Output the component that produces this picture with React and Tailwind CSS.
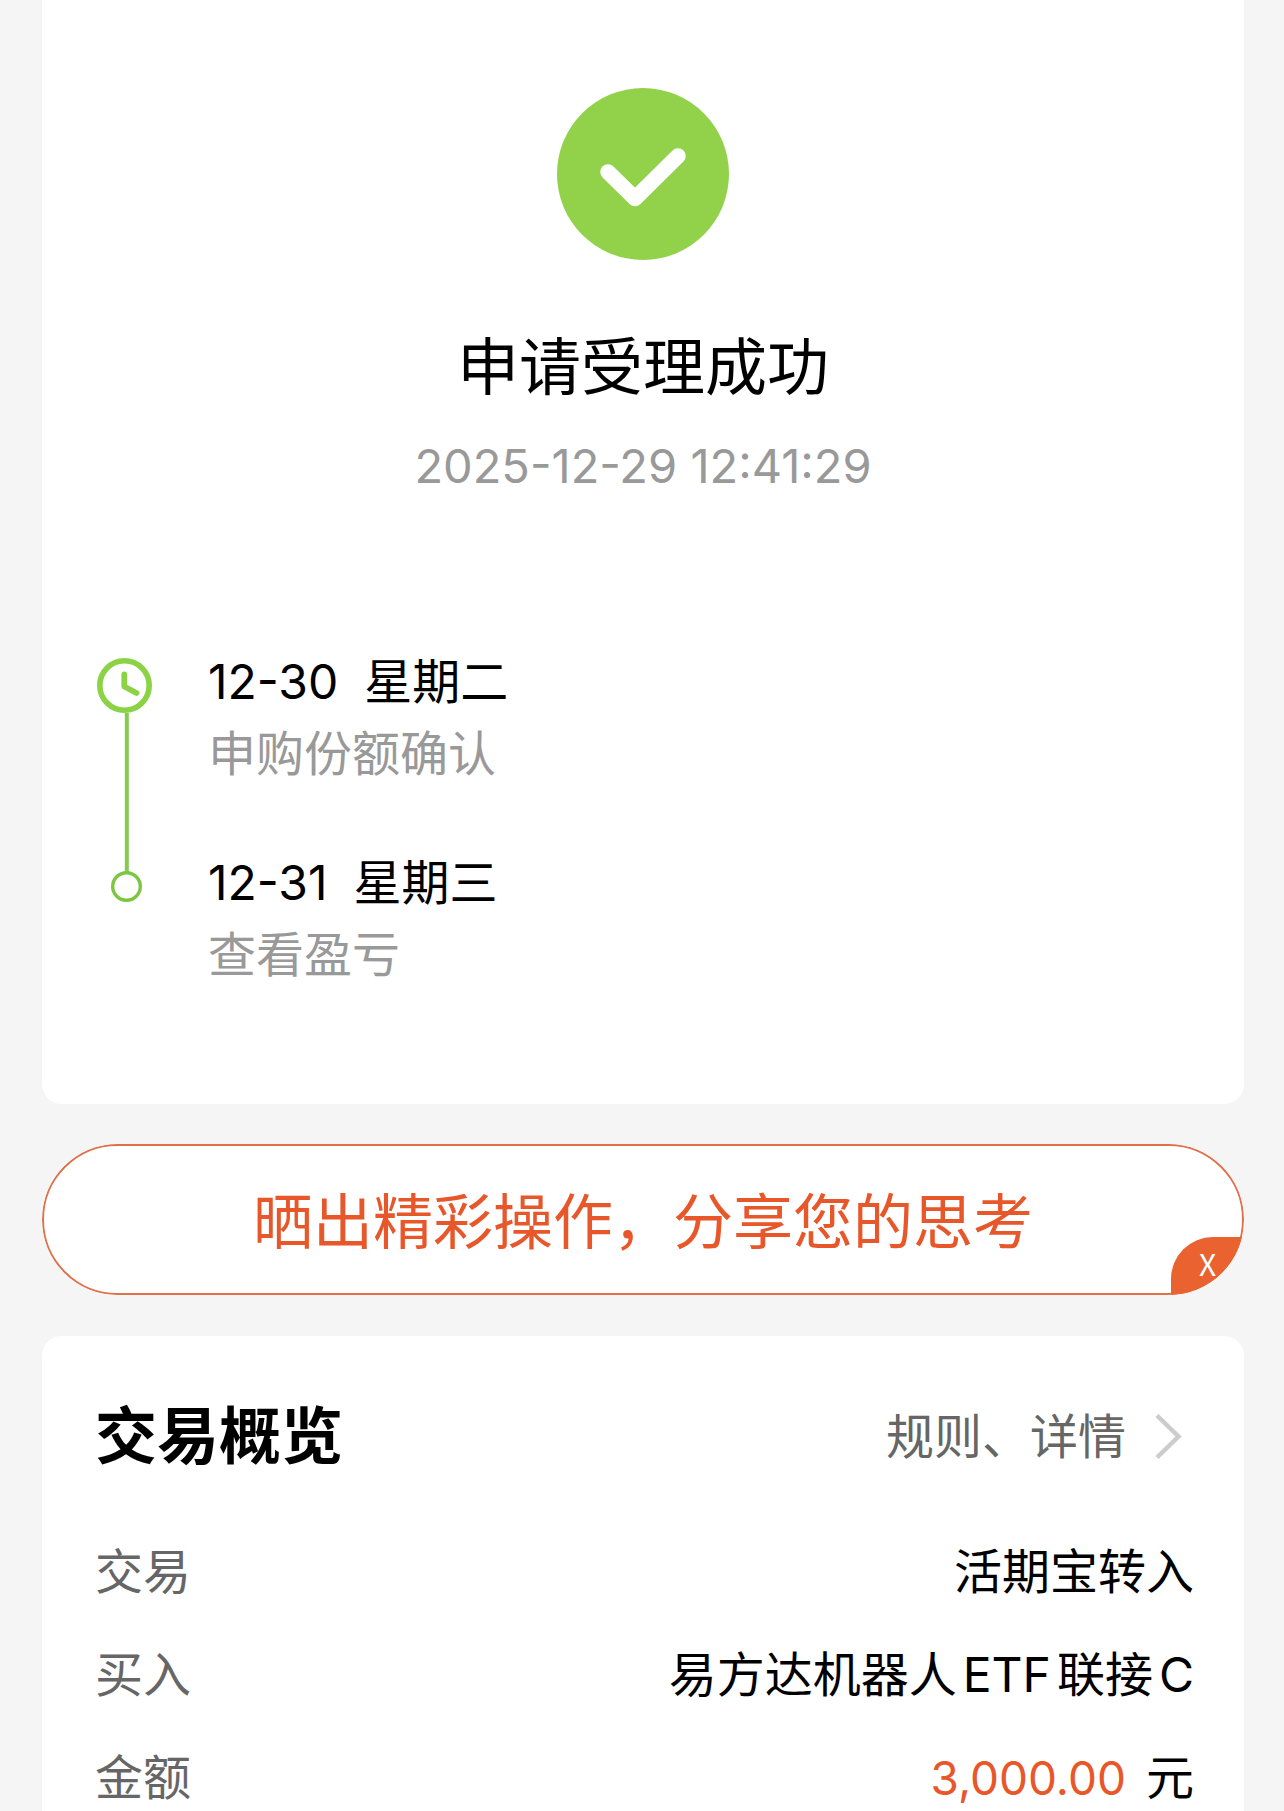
const etapes = [
  { date: "12-30", jour: "星期二", texte: "申购份额确认" },
  { date: "12-31", jour: "星期三", texte: "查看盈亏" },
];

function SuccessIcon() {
  return (
    <svg className="w-[172px] h-[172px]" viewBox="0 0 172 172" fill="none" aria-hidden="true">
      <circle cx="86" cy="86" r="86" fill="#92D24A" />
      <path d="M51 84L78 110.5L121 68" stroke="#fff" strokeWidth="15.5" strokeLinecap="round" strokeLinejoin="round" />
    </svg>
  );
}

// Horloge, trait vertical puis petit rond
function TimelineTrack() {
  return (
    <svg className="w-[58px] h-[246px] mt-3 shrink-0" viewBox="0 0 58 246" fill="none" aria-hidden="true">
      <circle cx="29.5" cy="27.5" r="24.7" stroke="#8BD345" strokeWidth="5.6" />
      <path d="M29.3 16.5V28.5L41.5 35" stroke="#8BD345" strokeWidth="5.8" strokeLinecap="round" strokeLinejoin="round" />
      <path d="M31.8 55V214" stroke="#86CB4E" strokeWidth="4" />
      <circle cx="31.5" cy="228.5" r="13.8" stroke="#7DC642" strokeWidth="3.4" />
    </svg>
  );
}

function Row({ label, children }) {
  return (
    <div className="flex items-center justify-between">
      <dt className="text-[#666]">{label}</dt>
      <dd className="text-black">{children}</dd>
    </div>
  );
}

function App() {
  return (
    <main
      lang="zh-CN"
      className="min-h-screen flex flex-col pl-[42px] pr-10 bg-[#f5f5f5] text-black text-[48px] leading-[72px] font-['Inter','Noto_Sans_CJK_SC',sans-serif]"
    >
      <section className="bg-white rounded-b-[20px] pt-[88px] pb-[113px]">
        <div className="flex flex-col items-center">
          <SuccessIcon />
          <h1 className="mt-[72px] text-[62px]">申请受理成功</h1>
          <time className="mt-[26px] text-[47px] text-[#999]">2025-12-29 12:41:29</time>
        </div>

        <div className="flex gap-[55px] mt-36 pl-[53px]">
          <TimelineTrack />
          <ol className="flex flex-col gap-[57px]">
            {etapes.map(e => (
              <li key={e.date}>
                <div className="flex gap-[26px]">
                  <span>{e.date}</span>
                  <span>{e.jour}</span>
                </div>
                <p className="text-[#999]">{e.texte}</p>
              </li>
            ))}
          </ol>
        </div>
      </section>

      <div className="relative mt-10 overflow-hidden rounded-full">
        <button
          type="button"
          className="block w-full pt-10 pb-[35px] rounded-full border-2 border-[#e07048] bg-white text-[60px] text-[#e8572a]"
        >
          晒出精彩操作，分享您的思考
        </button>
        <button
          type="button"
          aria-label="X"
          className="absolute right-0 bottom-0 w-[73px] h-[58px] rounded-tl-[42px] bg-[#e9622f] text-white text-[30px] leading-[52px] pb-1.5 font-['Noto_Sans_CJK_SC',sans-serif]"
        >
          X
        </button>
      </div>

      <section className="grow mt-[41px] bg-white rounded-t-[20px] pt-[65px] pb-0.5 pl-[53px] pr-[50px]">
        <div className="flex items-center justify-between">
          <h2 className="text-[62px] font-bold">交易概览</h2>
          <a href="#details" className="flex items-center gap-7 pr-3 text-[#666]">
            规则、详情
            <svg className="w-7 h-12" viewBox="0 0 28 48" fill="none" aria-hidden="true">
              <path d="M3 2.5L24.5 23.5L3 44.5" stroke="#ccc" strokeWidth="4.5" />
            </svg>
          </a>
        </div>
        <dl className="flex flex-col gap-[41px] mt-[68px] leading-[62px]">
          <Row label="交易">活期宝转入</Row>
          <Row label="买入">
            易方达机器人<span className="mx-1.5">ETF</span>联接<span className="ml-1.5">C</span>
          </Row>
          <Row label="金额">
            <span className="mr-5 text-[46px] text-[#e8572a]">3,000.00</span>元
          </Row>
        </dl>
      </section>
    </main>
  );
}

export default App;
